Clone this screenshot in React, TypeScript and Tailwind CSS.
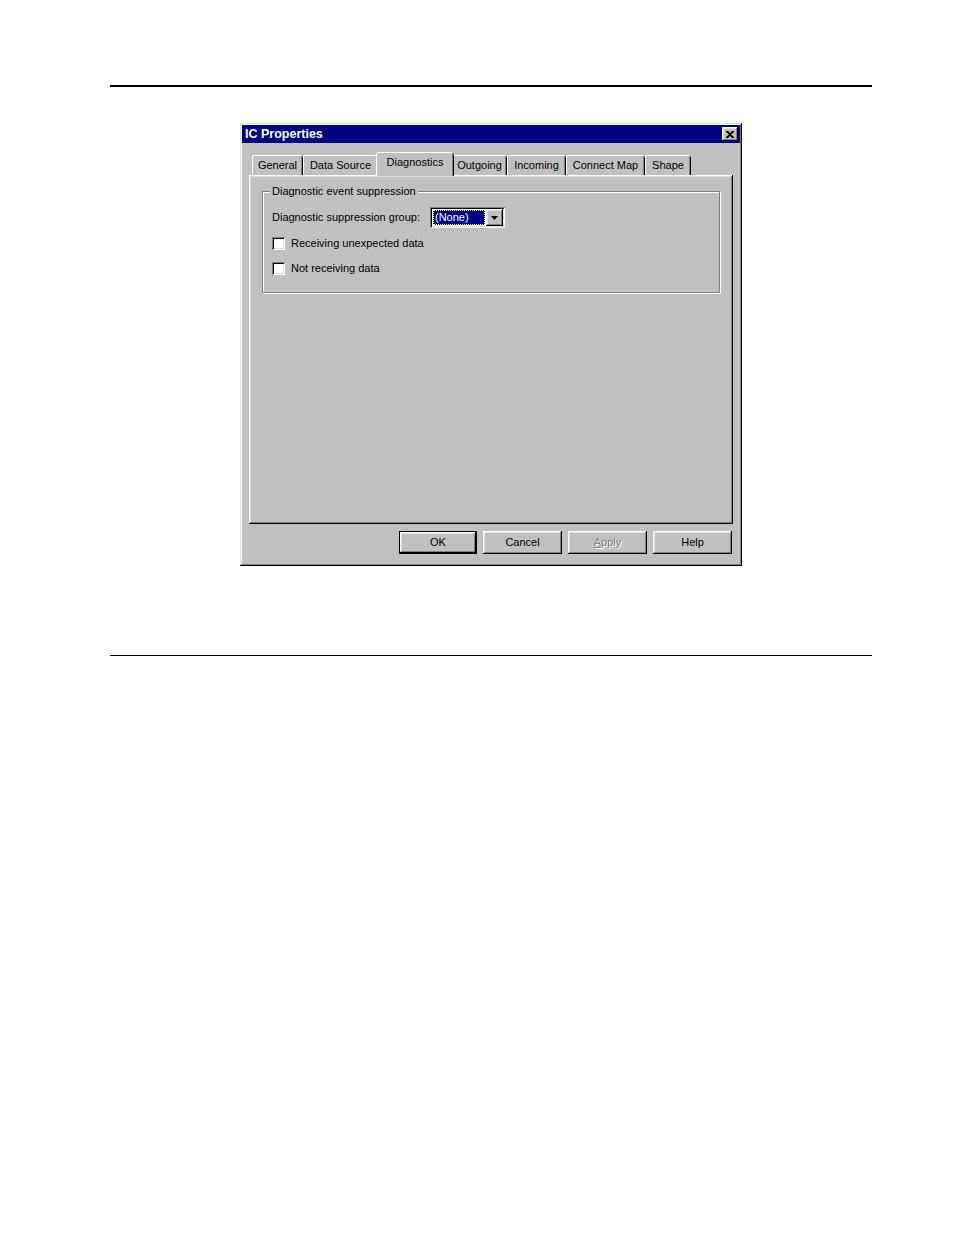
const font = { fontFamily: '"Liberation Sans", Arial, sans-serif' };

const raised =
  "shadow-[inset_-1px_-1px_#000,inset_1px_1px_#fff,inset_-2px_-2px_#808080,inset_2px_2px_#dfdfdf]";
const sunken =
  "shadow-[inset_1px_1px_#808080,inset_-1px_-1px_#fff,inset_2px_2px_#000,inset_-2px_-2px_#dfdfdf]";

const tabs = [
  { label: "General", w: "w-[51px]" },
  { label: "Data Source", w: "w-[75px]" },
  { label: "Diagnostics", w: "w-[78px]", active: true },
  { label: "Outgoing", w: "w-[55px]" },
  { label: "Incoming", w: "w-[59px]" },
  { label: "Connect Map", w: "w-[79px]" },
  { label: "Shape", w: "w-[46px]" },
];

function Tab({ label, w, active }: { label: string; w: string; active?: boolean }) {
  if (active) {
    return (
      <div
        className={`${w} relative z-10 -mx-[2px] -mb-[1px] h-[24px] rounded-t-[3px] bg-[#c0c0c0] pt-[4px] text-center shadow-[inset_1px_0_#fff,inset_0_1px_#fff,inset_-1px_0_#000,inset_-2px_0_#808080]`}
      >
        {label}
      </div>
    );
  }
  return (
    <div
      className={`${w} flex h-[20px] items-center justify-center rounded-t-[2px] pt-[1px] shadow-[inset_1px_0_#fff,inset_0_1px_#fff,inset_-1px_0_#000,inset_-2px_0_#808080]`}
    >
      {label}
    </div>
  );
}

function Checkbox({ label }: { label: string }) {
  return (
    <div className="flex h-[13px] items-center gap-[6px]">
      <div className={`h-[13px] w-[13px] bg-white ${sunken}`} />
      <span>{label}</span>
    </div>
  );
}

function Button({ children, def, disabled }: { children: React.ReactNode; def?: boolean; disabled?: boolean }) {
  if (def) {
    return (
      <div className="h-[23px] w-[78px] border border-black">
        <div className={`flex h-full w-full items-center justify-center ${raised}`}>{children}</div>
      </div>
    );
  }
  return (
    <div
      className={`flex h-[23px] w-[79px] items-center justify-center ${raised} ${
        disabled ? "text-[#808080] [text-shadow:1px_1px_0_#fff]" : ""
      }`}
    >
      {children}
    </div>
  );
}

export default function App() {
  return (
    <div className="min-h-[1235px] w-[954px] bg-white pt-[85px]" style={font}>
      <div className="ml-[110px] mr-[82px] h-[2px] bg-black" />

      <div
        className={`ml-[240px] mt-[36px] h-[443px] w-[502px] bg-[#c0c0c0] p-[2px] text-[11px] leading-[13px] text-black shadow-[inset_-1px_-1px_#000,inset_1px_1px_#dfdfdf,inset_-2px_-2px_#808080,inset_2px_2px_#fff]`}
      >
        {/* title bar */}
        <div className="flex h-[18px] items-center justify-between bg-[#000080] pl-[3px] pr-[2px]">
          <span className="text-[12.5px] font-bold text-white">IC Properties</span>
          <div className={`flex h-[14px] w-[16px] items-center justify-center bg-[#c0c0c0] ${raised}`}>
            <svg width="8" height="7" viewBox="0 0 8 7">
              <path d="M0 0h2l2 2 2-2h2v1L5 3.5 8 6v1H6L4 5 2 7H0V6l3-2.5L0 1z" fill="#000" />
            </svg>
          </div>
        </div>

        <div className="px-[7px] pt-[9px]">
          {/* tabs */}
          <div className="flex h-[23px] items-end pl-[3px]">
            {tabs.map((t) => (
              <Tab key={t.label} {...t} />
            ))}
          </div>

          {/* tab panel */}
          <div className={`h-[349px] pl-[13px] pt-[10px] ${raised}`}>
            <fieldset className="w-[458px] border border-[#808080] pb-[17px] pl-[7px] shadow-[1px_1px_0_#fff,inset_1px_1px_0_#fff]">
              <legend className="bg-[#c0c0c0] px-[2px] leading-[13px]">Diagnostic event suppression</legend>
              <div className="pl-[2px] pt-[9px]">
                <div className="flex h-[21px] items-center">
                  <span className="w-[158px]">Diagnostic suppression group:</span>
                  <div className={`flex h-[21px] w-[75px] items-center bg-white p-[2px] ${sunken}`}>
                    <div className="ml-[1px] flex h-[15px] w-[52px] items-center border border-dotted border-[#ffff80] bg-[#000080] pl-[1px] text-white">
                      (None)
                    </div>
                    <div className={`ml-auto flex h-[17px] w-[17px] items-center justify-center bg-[#c0c0c0] ${raised}`}>
                      <svg width="7" height="4" viewBox="0 0 7 4">
                        <path d="M0 0h7L3.5 4z" fill="#000" />
                      </svg>
                    </div>
                  </div>
                </div>
                <div className="mt-[9px]">
                  <Checkbox label="Receiving unexpected data" />
                </div>
                <div className="mt-[12px]">
                  <Checkbox label="Not receiving data" />
                </div>
              </div>
            </fieldset>
          </div>

          {/* buttons */}
          <div className="mt-[7px] flex justify-end gap-[6px] pr-[1px]">
            <Button def>OK</Button>
            <Button>Cancel</Button>
            <Button disabled>
              <span>
                <span className="underline">A</span>pply
              </span>
            </Button>
            <Button>Help</Button>
          </div>
        </div>
      </div>

      <div className="ml-[110px] mr-[82px] mt-[89px] h-[1px] bg-black" />
    </div>
  );
}
